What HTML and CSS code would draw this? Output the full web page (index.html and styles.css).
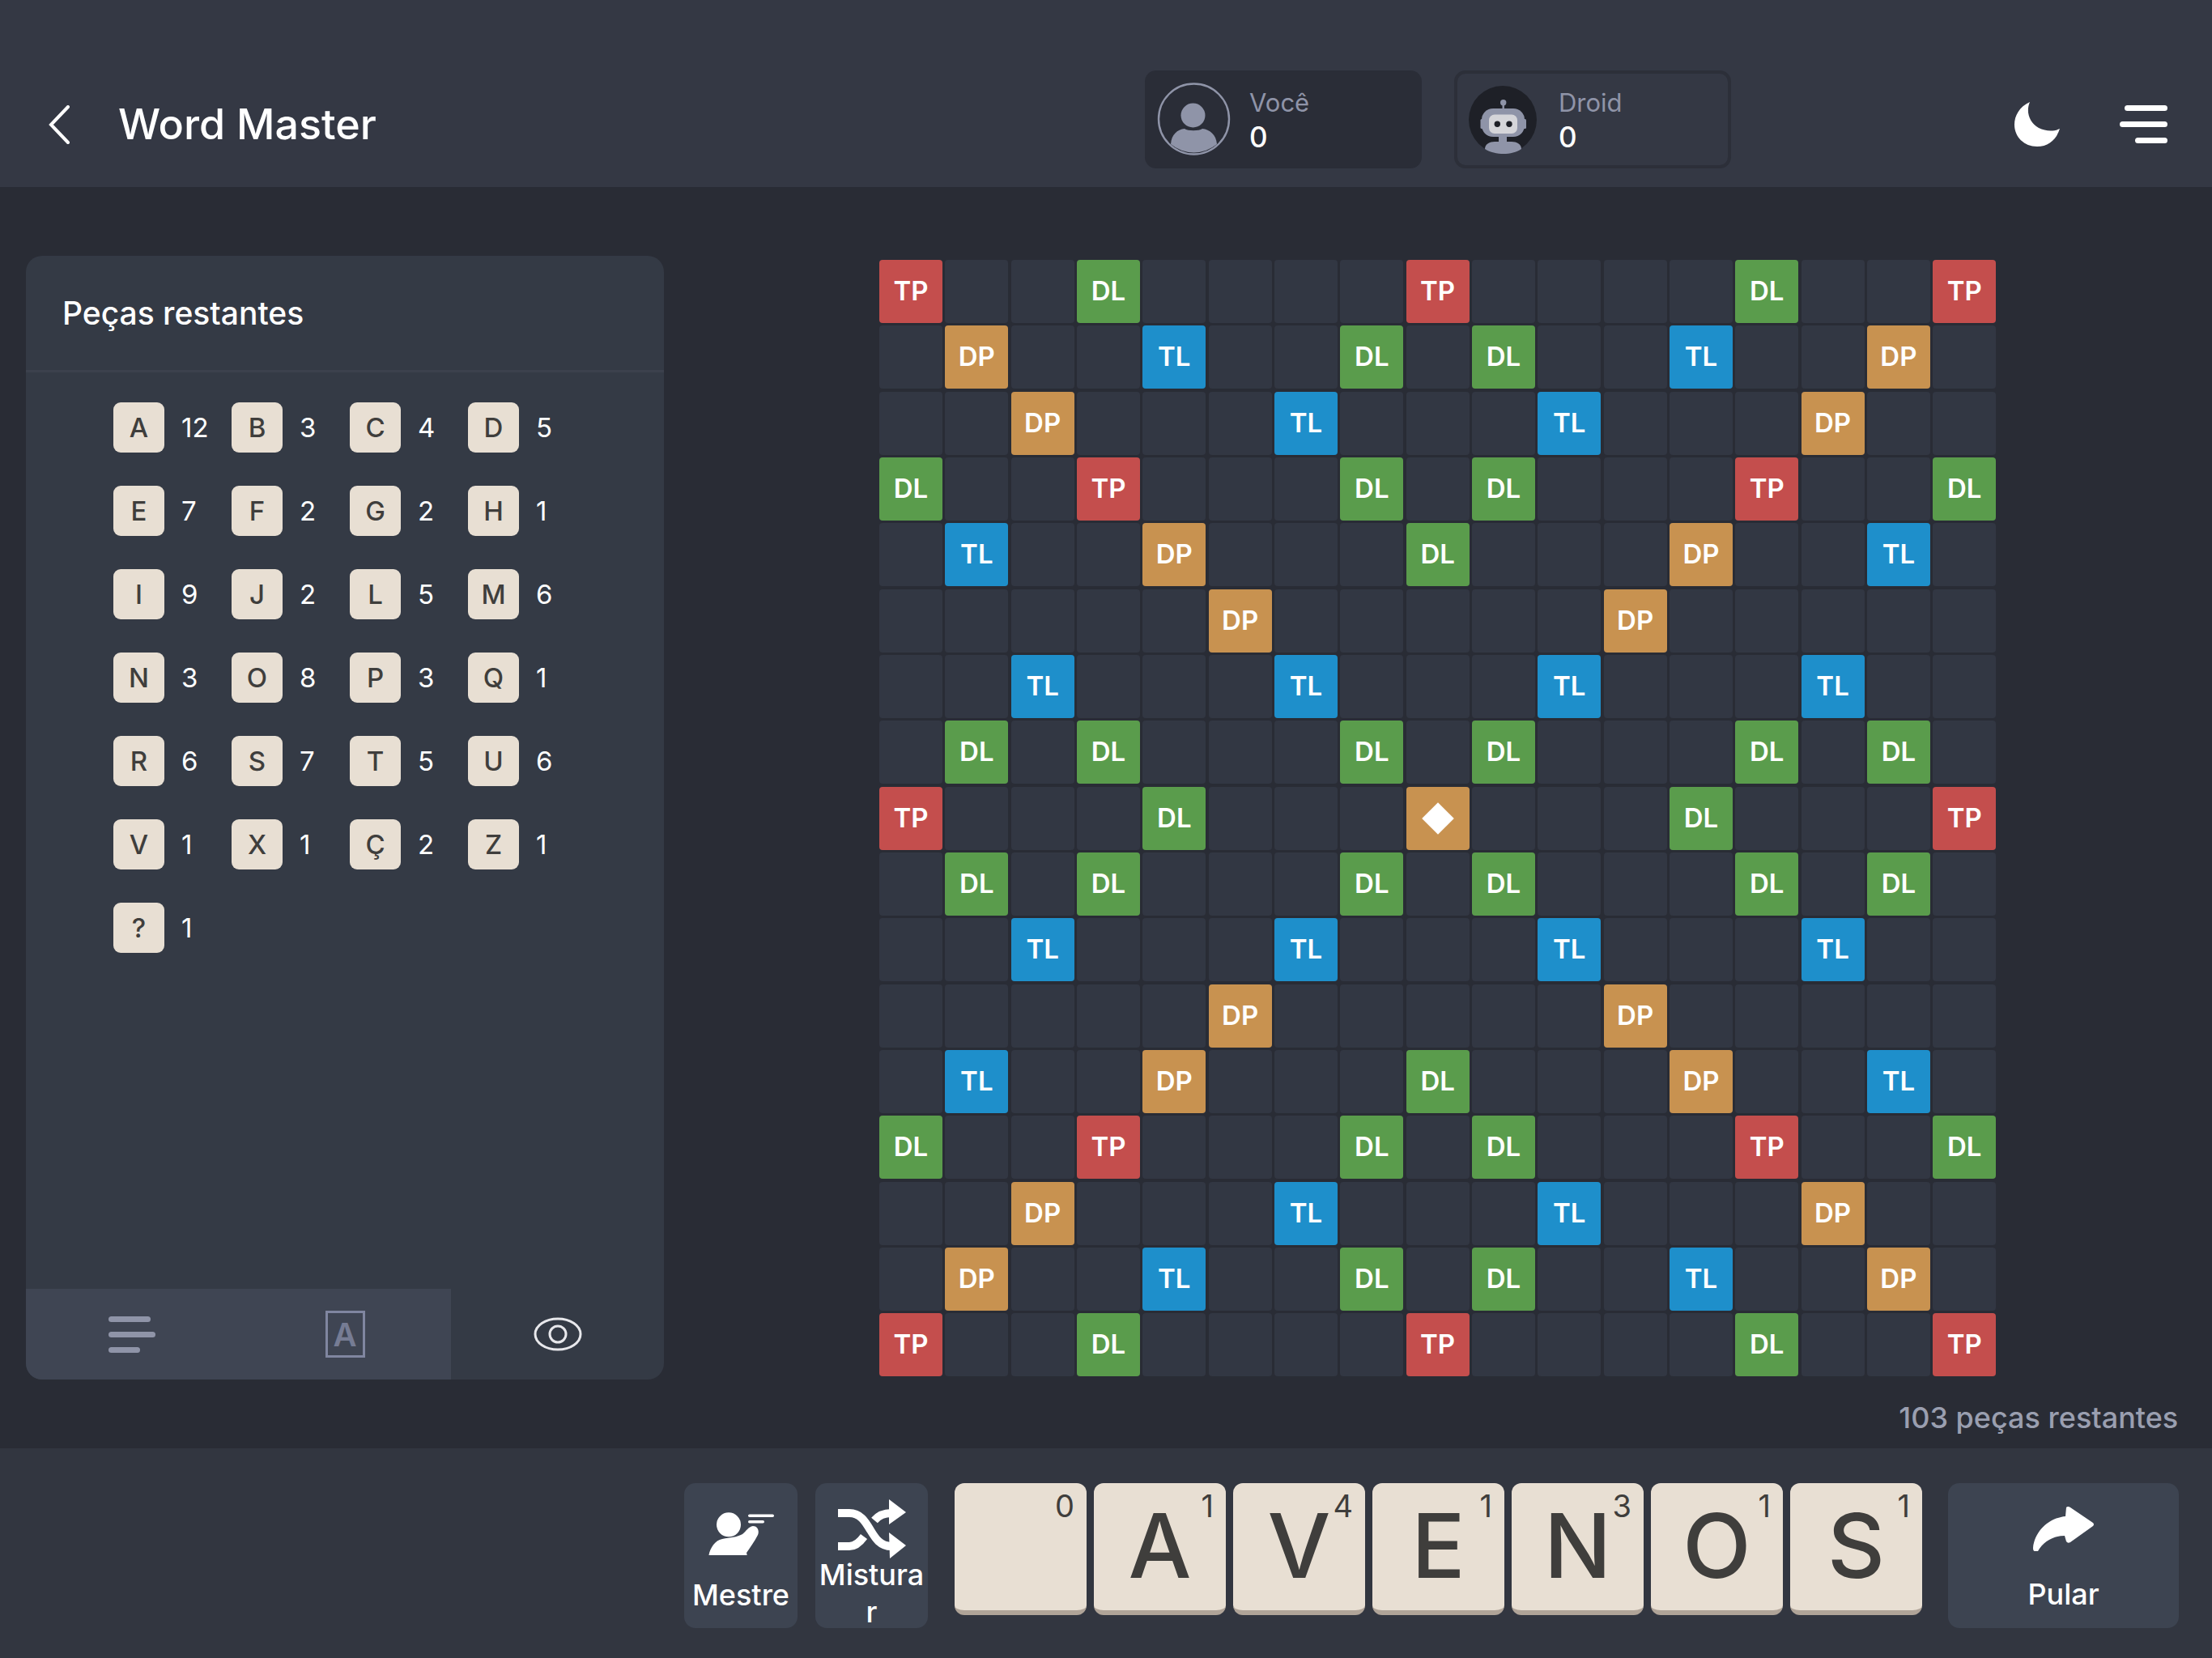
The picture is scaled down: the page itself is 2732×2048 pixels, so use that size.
FILE: index.html
```html
<!DOCTYPE html>
<html lang="pt-BR">
<head>
    <meta charset="UTF-8">
    <title>Word Master</title>
    <link rel="stylesheet" href="styles.css">
</head>
<body>
    <header class="topbar">
        <svg class="back-icon" viewBox="0 0 26 48"><path d="M24 2 3 24l21 22"/></svg>
        <h1 class="game-title">Word Master</h1>
        <div class="players">
            <div class="player player-active">
                <svg class="avatar" viewBox="0 0 100 100">
                    <circle class="avatar-ring" cx="49.5" cy="48" r="43.5"/>
                    <circle class="avatar-fill" cx="48.5" cy="43.5" r="15"/>
                    <path class="avatar-fill" d="M21 79c1-12 8-18 17-19 4 3 18 3 22 0 9 1 17 7 18 19a44 44 0 0 1-57 0z"/>
                </svg>
                <div class="player-info">
                    <div class="player-name">Você</div>
                    <div class="player-score">0</div>
                </div>
            </div>
            <div class="player player-droid">
                <svg class="avatar-robot" viewBox="8 6 84 84">
                    <circle cx="50" cy="48" r="42" fill="#1e2027"/>
                    <circle class="avatar-fill" cx="50.7" cy="26.7" r="3.7"/>
                    <rect class="avatar-fill" x="49.5" y="28" width="2.4" height="8"/>
                    <rect class="avatar-fill" x="22.5" y="47" width="4" height="12" rx="1.5"/>
                    <rect class="avatar-fill" x="75" y="47" width="4" height="12" rx="1.5"/>
                    <rect class="avatar-fill" x="24" y="34" width="53" height="35" rx="14"/>
                    <rect x="33" y="41.5" width="35" height="23.5" rx="7" fill="#d5d5d9"/>
                    <circle cx="43.3" cy="53.3" r="3.7" fill="#1e2027"/>
                    <circle cx="58" cy="53.3" r="3.7" fill="#1e2027"/>
                    <rect class="avatar-fill" x="45" y="69" width="10" height="8"/>
                    <path class="avatar-fill" d="M28 84c0-6 6-9 12-9h21c6 0 12 3 12 9-6 4-14 6-22 6s-17-2-23-6z"/>
                </svg>
                <div class="player-info">
                    <div class="player-name">Droid</div>
                    <div class="player-score">0</div>
                </div>
            </div>
        </div>
        <svg class="moon-icon" viewBox="0 0 56 55"><path d="M19 0C6 6 0 17 0 28c0 15 12 27 28 27 14 0 24-9 28-22-8 4-18 3-26-1C18 25 14 12 19 0z"/></svg>
        <svg class="menu-icon" viewBox="0 0 59 47"><rect x="6" width="53" height="7" rx="3.5"/><rect y="20" width="59" height="7" rx="3.5"/><rect x="19" y="40" width="40" height="7" rx="3.5"/></svg>
    </header>

    <main class="game">
        <aside class="panel">
            <div class="panel-head">Peças restantes</div>
            <div class="letters">
                <div class="letter"><span class="letter-tile">A</span>12</div>
                <div class="letter"><span class="letter-tile">B</span>3</div>
                <div class="letter"><span class="letter-tile">C</span>4</div>
                <div class="letter"><span class="letter-tile">D</span>5</div>
                <div class="letter"><span class="letter-tile">E</span>7</div>
                <div class="letter"><span class="letter-tile">F</span>2</div>
                <div class="letter"><span class="letter-tile">G</span>2</div>
                <div class="letter"><span class="letter-tile">H</span>1</div>
                <div class="letter"><span class="letter-tile">I</span>9</div>
                <div class="letter"><span class="letter-tile">J</span>2</div>
                <div class="letter"><span class="letter-tile">L</span>5</div>
                <div class="letter"><span class="letter-tile">M</span>6</div>
                <div class="letter"><span class="letter-tile">N</span>3</div>
                <div class="letter"><span class="letter-tile">O</span>8</div>
                <div class="letter"><span class="letter-tile">P</span>3</div>
                <div class="letter"><span class="letter-tile">Q</span>1</div>
                <div class="letter"><span class="letter-tile">R</span>6</div>
                <div class="letter"><span class="letter-tile">S</span>7</div>
                <div class="letter"><span class="letter-tile">T</span>5</div>
                <div class="letter"><span class="letter-tile">U</span>6</div>
                <div class="letter"><span class="letter-tile">V</span>1</div>
                <div class="letter"><span class="letter-tile">X</span>1</div>
                <div class="letter"><span class="letter-tile">Ç</span>2</div>
                <div class="letter"><span class="letter-tile">Z</span>1</div>
                <div class="letter"><span class="letter-tile">?</span>1</div>
            </div>
            <div class="tabs">
                <div class="tab tab-on">
                    <svg class="list-icon" viewBox="0 0 58 45"><rect width="52" height="7" rx="3.5"/><rect y="19" width="58" height="7" rx="3.5"/><rect y="38" width="39" height="7" rx="3.5"/></svg>
                </div>
                <div class="tab tab-on"><span class="tab-letter">A</span></div>
                <div class="tab">
                    <svg class="eye-icon" viewBox="0 0 60 42"><ellipse cx="30" cy="21" rx="28" ry="19"/><circle cx="30" cy="21" r="10"/></svg>
                </div>
            </div>
        </aside>

        <section class="board-area">
            <div class="board">
                <span class="tp">TP</span><span></span><span></span><span class="dl">DL</span><span></span><span></span><span></span><span></span><span class="tp">TP</span><span></span><span></span><span></span><span></span><span class="dl">DL</span><span></span><span></span><span class="tp">TP</span>
                <span></span><span class="dp">DP</span><span></span><span></span><span class="tl">TL</span><span></span><span></span><span class="dl">DL</span><span></span><span class="dl">DL</span><span></span><span></span><span class="tl">TL</span><span></span><span></span><span class="dp">DP</span><span></span>
                <span></span><span></span><span class="dp">DP</span><span></span><span></span><span></span><span class="tl">TL</span><span></span><span></span><span></span><span class="tl">TL</span><span></span><span></span><span></span><span class="dp">DP</span><span></span><span></span>
                <span class="dl">DL</span><span></span><span></span><span class="tp">TP</span><span></span><span></span><span></span><span class="dl">DL</span><span></span><span class="dl">DL</span><span></span><span></span><span></span><span class="tp">TP</span><span></span><span></span><span class="dl">DL</span>
                <span></span><span class="tl">TL</span><span></span><span></span><span class="dp">DP</span><span></span><span></span><span></span><span class="dl">DL</span><span></span><span></span><span></span><span class="dp">DP</span><span></span><span></span><span class="tl">TL</span><span></span>
                <span></span><span></span><span></span><span></span><span></span><span class="dp">DP</span><span></span><span></span><span></span><span></span><span></span><span class="dp">DP</span><span></span><span></span><span></span><span></span><span></span>
                <span></span><span></span><span class="tl">TL</span><span></span><span></span><span></span><span class="tl">TL</span><span></span><span></span><span></span><span class="tl">TL</span><span></span><span></span><span></span><span class="tl">TL</span><span></span><span></span>
                <span></span><span class="dl">DL</span><span></span><span class="dl">DL</span><span></span><span></span><span></span><span class="dl">DL</span><span></span><span class="dl">DL</span><span></span><span></span><span></span><span class="dl">DL</span><span></span><span class="dl">DL</span><span></span>
                <span class="tp">TP</span><span></span><span></span><span></span><span class="dl">DL</span><span></span><span></span><span></span><span class="dp"><i class="star"></i></span><span></span><span></span><span></span><span class="dl">DL</span><span></span><span></span><span></span><span class="tp">TP</span>
                <span></span><span class="dl">DL</span><span></span><span class="dl">DL</span><span></span><span></span><span></span><span class="dl">DL</span><span></span><span class="dl">DL</span><span></span><span></span><span></span><span class="dl">DL</span><span></span><span class="dl">DL</span><span></span>
                <span></span><span></span><span class="tl">TL</span><span></span><span></span><span></span><span class="tl">TL</span><span></span><span></span><span></span><span class="tl">TL</span><span></span><span></span><span></span><span class="tl">TL</span><span></span><span></span>
                <span></span><span></span><span></span><span></span><span></span><span class="dp">DP</span><span></span><span></span><span></span><span></span><span></span><span class="dp">DP</span><span></span><span></span><span></span><span></span><span></span>
                <span></span><span class="tl">TL</span><span></span><span></span><span class="dp">DP</span><span></span><span></span><span></span><span class="dl">DL</span><span></span><span></span><span></span><span class="dp">DP</span><span></span><span></span><span class="tl">TL</span><span></span>
                <span class="dl">DL</span><span></span><span></span><span class="tp">TP</span><span></span><span></span><span></span><span class="dl">DL</span><span></span><span class="dl">DL</span><span></span><span></span><span></span><span class="tp">TP</span><span></span><span></span><span class="dl">DL</span>
                <span></span><span></span><span class="dp">DP</span><span></span><span></span><span></span><span class="tl">TL</span><span></span><span></span><span></span><span class="tl">TL</span><span></span><span></span><span></span><span class="dp">DP</span><span></span><span></span>
                <span></span><span class="dp">DP</span><span></span><span></span><span class="tl">TL</span><span></span><span></span><span class="dl">DL</span><span></span><span class="dl">DL</span><span></span><span></span><span class="tl">TL</span><span></span><span></span><span class="dp">DP</span><span></span>
                <span class="tp">TP</span><span></span><span></span><span class="dl">DL</span><span></span><span></span><span></span><span></span><span class="tp">TP</span><span></span><span></span><span></span><span></span><span class="dl">DL</span><span></span><span></span><span class="tp">TP</span>
            </div>
            <div class="bag-count">103 peças restantes</div>
        </section>
    </main>

    <footer class="rack-bar">
        <button class="tool tool-master">
            <svg class="master-icon" viewBox="14 5 83 62"><circle cx="40" cy="29.3" r="15"/><path d="M15 70c1-10 7-21 17-23 10-2 18-2 25-6 5-4 7-9 13-10 6 0 8 6 6 11-4 8-10 16-14 22l2 9H17q-3 0-2-3z"/><rect x="64" y="16.5" width="32" height="3.6" rx="1.8"/><rect x="64" y="24" width="20" height="3.6" rx="1.8"/></svg>
            <span class="tool-label">Mestre</span>
        </button>
        <button class="tool tool-shuffle">
            <svg class="shuffle-icon" viewBox="174 7 84 73">
                <path class="shuffle-line" d="M174 24h14c14 0 20 11 26 21s12 20 26 20"/>
                <path class="shuffle-line" d="M174 65h14c7 0 13-5 18-12"/>
                <path class="shuffle-line" d="M219 33c5-6 11-9 21-9"/>
                <path d="M237 7l21 16-21 15zM237 48l21 16-20 16z"/>
            </svg>
            <span class="tool-label">Misturar</span>
        </button>
        <div class="rack">
            <div class="tile"><span class="tile-value">0</span></div>
            <div class="tile">A<span class="tile-value">1</span></div>
            <div class="tile">V<span class="tile-value">4</span></div>
            <div class="tile">E<span class="tile-value">1</span></div>
            <div class="tile">N<span class="tile-value">3</span></div>
            <div class="tile">O<span class="tile-value">1</span></div>
            <div class="tile">S<span class="tile-value">1</span></div>
        </div>
        <button class="tool tool-skip">
            <svg class="skip-icon" viewBox="0 0 75 55"><path d="M40 12l1-11q2-2 5 0l28 19q2 2 0 4L46 44q-3 2-5-1l-2-7C25 36 13 43 6 55H2q-2 0-2-4C2 30 20 14 40 12z"/></svg>
            <span class="tool-label">Pular</span>
        </button>
    </footer>
</body>
</html>
```

FILE: styles.css
```css
* {
    box-sizing: border-box;
}
body {
    margin: 0;
    width: 2732px;
    height: 2048px;
    overflow: hidden;
    display: flex;
    flex-direction: column;
    background: #292c35;
    color: #fff;
    font-family: Inter, "Noto Sans", sans-serif;
}

/* top bar */
.topbar {
    height: 231px;
    flex: none;
    display: flex;
    align-items: center;
    padding: 76px 55px 0 60px;
    background: #343844;
}
.back-icon {
    width: 26px;
    height: 48px;
    fill: none;
    stroke: #fff;
    stroke-width: 4;
    stroke-linecap: round;
}
.game-title {
    margin: 0 0 0 60px;
    font-size: 52px;
    font-weight: 500;
}
.players {
    display: flex;
    gap: 40px;
    margin-left: auto;
    margin-right: 350px;
    margin-bottom: 12px;
}
.player {
    width: 342px;
    height: 121px;
    display: flex;
    align-items: center;
    border-radius: 14px;
}
.player-active {
    background: #2a2d37;
    padding-left: 17px;
    gap: 24px;
}
.player-droid {
    border: 4px solid #2c2f39;
    padding-left: 14px;
    gap: 27px;
}
.avatar {
    width: 100px;
    height: 100px;
    margin: 3px -6px 0 -6px;
}
.avatar-robot {
    width: 84px;
    height: 84px;
}
.avatar-ring {
    fill: none;
    stroke: #8f94a8;
    stroke-width: 2.4;
}
.avatar-fill {
    fill: #8f94a8;
}
.player-info {
    padding-top: 1px;
}
.player-name {
    font-size: 31px;
    line-height: 43px;
    color: #8f94a8;
}
.player-score {
    font-size: 35px;
    line-height: 43px;
    font-weight: 500;
}
.moon-icon {
    width: 56px;
    height: 55px;
    fill: #fff;
    margin-right: 74px;
}
.menu-icon {
    width: 59px;
    height: 47px;
    fill: #fff;
}

/* middle */
.game {
    flex: 1;
    display: flex;
    padding: 85px 0 0 32px;
}
.panel {
    width: 788px;
    height: 1388px;
    display: flex;
    flex-direction: column;
    border-radius: 20px;
    overflow: hidden;
    background: #343a45;
}
.panel-head {
    height: 144px;
    flex: none;
    display: flex;
    align-items: center;
    padding-left: 45px;
    border-bottom: 3px solid #3c414d;
    font-size: 39px;
    font-weight: 500;
}
.letters {
    flex: 1;
    display: grid;
    grid-template-columns: repeat(4, 146px);
    grid-auto-rows: 62px;
    row-gap: 41px;
    align-content: start;
    padding: 37px 0 0 108px;
}
.letter {
    display: flex;
    align-items: center;
    gap: 21px;
    font-size: 33px;
}
.letter-tile {
    width: 63px;
    height: 62px;
    display: flex;
    align-items: center;
    justify-content: center;
    border-radius: 9px;
    background: #e8dfd3;
    color: #3f3e3c;
    font-weight: 500;
}
.tabs {
    height: 112px;
    flex: none;
    display: flex;
}
.tab {
    flex: 1;
    display: flex;
    align-items: center;
    justify-content: center;
}
.tab-on {
    background: #3f4553;
}
.list-icon {
    width: 58px;
    height: 45px;
    fill: #8f94a8;
}
.tab-letter {
    width: 49px;
    height: 58px;
    display: flex;
    align-items: center;
    justify-content: center;
    border: 3px solid #8086a0;
    color: #767c94;
    font-size: 40px;
    font-weight: 600;
}
.eye-icon {
    width: 60px;
    height: 42px;
    fill: none;
    stroke: #e8e8ec;
    stroke-width: 3;
}

/* board */
.board-area {
    margin-left: 266px;
    padding-top: 5px;
}
.board {
    display: grid;
    grid-template-columns: repeat(17, 78px);
    grid-auto-rows: 78px;
    gap: 3.33px;
}
.board span {
    display: flex;
    align-items: center;
    justify-content: center;
    padding-bottom: 2px;
    border-radius: 4px;
    background: #323743;
    font-size: 33px;
    font-weight: 600;
}
.board .tp {
    background: #c44e4d;
}
.board .dl {
    background: #5a9c4c;
}
.board .dp {
    background: #c89250;
}
.board .tl {
    background: #1e8fcb;
}
.star {
    width: 28px;
    height: 28px;
    margin-top: 2px;
    background: #fff;
    transform: rotate(45deg);
}
.bag-count {
    margin: 29px -225px 0 0;
    text-align: right;
    font-size: 36px;
    font-weight: 500;
    color: #9a9fb0;
}

/* bottom bar */
.rack-bar {
    height: 259px;
    flex: none;
    display: flex;
    align-items: flex-start;
    justify-content: flex-end;
    padding: 43px 41px 0 0;
    background: #323640;
}
.tool {
    height: 179px;
    display: flex;
    flex-direction: column;
    align-items: center;
    padding: 27px 0 0;
    border: none;
    border-radius: 14px;
    background: #3d4451;
    color: #fff;
    font-family: inherit;
}
.tool-label {
    flex: none;
    font-size: 36px;
    line-height: 46px;
    font-weight: 500;
}
.tool-master {
    width: 140px;
}
.tool-master .tool-label {
    margin-top: 26px;
}
.master-icon {
    flex: none;
    width: 83px;
    height: 62px;
    fill: #fff;
}
.tool-shuffle {
    width: 139px;
    margin-left: 22px;
    padding: 20px 0 0;
}
.tool-shuffle .tool-label {
    margin-top: -3px;
    word-break: break-all;
}
.shuffle-icon {
    flex: none;
    width: 84px;
    height: 73px;
    fill: #fff;
}
.shuffle-line {
    fill: none;
    stroke: #fff;
    stroke-width: 10;
}
.tool-skip {
    width: 285px;
    margin-left: 32px;
    padding-top: 29px;
}
.tool-skip .tool-label {
    margin-top: 30px;
}
.skip-icon {
    flex: none;
    width: 75px;
    height: 55px;
    fill: #fff;
}
.rack {
    display: flex;
    gap: 9px;
    margin-left: 33px;
}
.tile {
    position: relative;
    width: 163px;
    height: 163px;
    display: flex;
    align-items: center;
    justify-content: center;
    padding-bottom: 4px;
    border-radius: 12px;
    border-bottom: 6px solid #b0a498;
    background: #e8dfd3;
    color: #3f3e3c;
    font-size: 110px;
    font-weight: 500;
}
.tile-value {
    position: absolute;
    top: 5px;
    right: 15px;
    font-size: 38px;
    font-weight: 400;
}
```
